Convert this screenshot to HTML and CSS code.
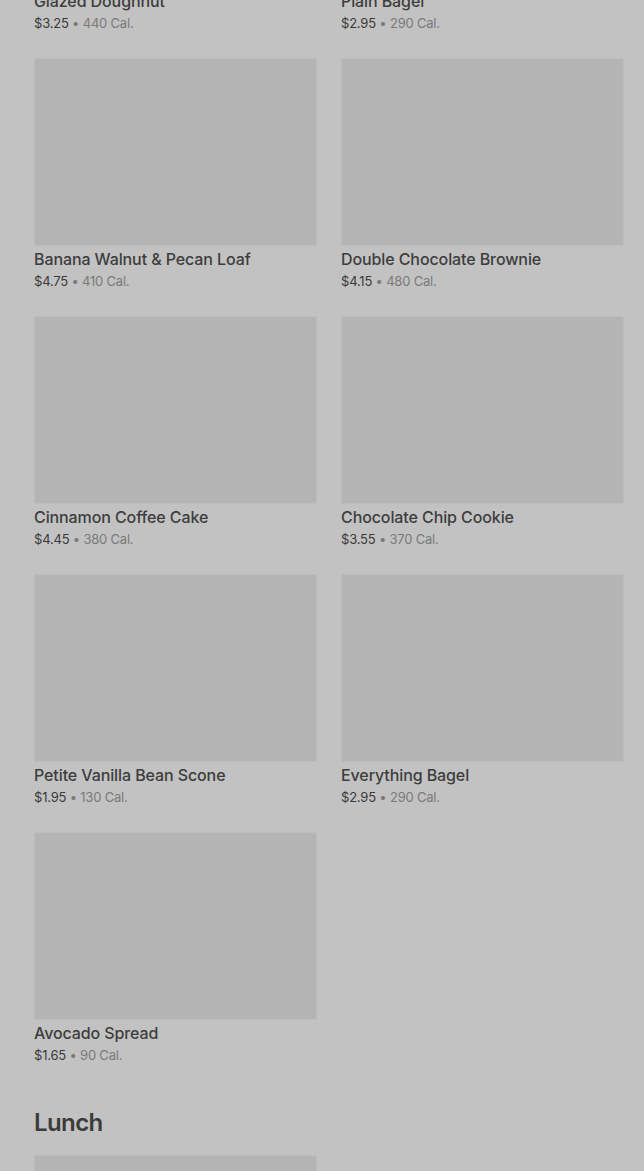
FILE: index.html
```html
<!DOCTYPE html>
<html lang="en">
<head>
<meta charset="UTF-8">
<title>Menu</title>
<link rel="stylesheet" href="styles.css">
</head>
<body>

<div class="menu">
    <div class="item-grid">
        <div class="item">
            <div class="item-photo"></div>
            <div class="item-name">Glazed Doughnut</div>
            <div class="item-meta"><span class="price">$3.25</span> • 440 Cal.</div>
        </div>
        <div class="item">
            <div class="item-photo"></div>
            <div class="item-name">Plain Bagel</div>
            <div class="item-meta"><span class="price">$2.95</span> • 290 Cal.</div>
        </div>
        <div class="item">
            <div class="item-photo"></div>
            <div class="item-name">Banana Walnut &amp; Pecan Loaf</div>
            <div class="item-meta"><span class="price">$4.75</span> • 410 Cal.</div>
        </div>
        <div class="item">
            <div class="item-photo"></div>
            <div class="item-name">Double Chocolate Brownie</div>
            <div class="item-meta"><span class="price">$4.15</span> • 480 Cal.</div>
        </div>
        <div class="item">
            <div class="item-photo"></div>
            <div class="item-name">Cinnamon Coffee Cake</div>
            <div class="item-meta"><span class="price">$4.45</span> • 380 Cal.</div>
        </div>
        <div class="item">
            <div class="item-photo"></div>
            <div class="item-name">Chocolate Chip Cookie</div>
            <div class="item-meta"><span class="price">$3.55</span> • 370 Cal.</div>
        </div>
        <div class="item">
            <div class="item-photo"></div>
            <div class="item-name">Petite Vanilla Bean Scone</div>
            <div class="item-meta"><span class="price">$1.95</span> • 130 Cal.</div>
        </div>
        <div class="item">
            <div class="item-photo"></div>
            <div class="item-name">Everything Bagel</div>
            <div class="item-meta"><span class="price">$2.95</span> • 290 Cal.</div>
        </div>
        <div class="item">
            <div class="item-photo"></div>
            <div class="item-name">Avocado Spread</div>
            <div class="item-meta"><span class="price">$1.65</span> • 90 Cal.</div>
        </div>
    </div>

    <h2 class="section-title">Lunch</h2>
    <div class="item-grid">
        <div class="item">
            <div class="item-photo"></div>
        </div>
    </div>
</div>

</body>
</html>
```

FILE: styles.css
```css
html, body {
    margin: 0;
    background-color: #c2c2c2;
}
body {
    font-family: Inter, "Noto Sans", sans-serif;
    color: #3b3b3b;
    overflow: hidden;
}
.menu {
    margin-top: -200px;
    padding: 0 20px 0 34px;
}
.item-grid {
    display: grid;
    grid-template-columns: 1fr 1fr;
    column-gap: 24px;
    row-gap: 24px;
}
.item-photo {
    height: 188px;
    background-color: #b4b4b4;
    border: 1px solid #bcbcbc;
    box-sizing: border-box;
}
.item-name {
    margin-top: 2px;
    font-size: 16px;
    font-weight: 500;
    line-height: 22px;
    letter-spacing: -0.1px;
    color: #3d3d3d;
}
.item-meta {
    font-size: 13px;
    line-height: 22px;
    letter-spacing: -0.2px;
    color: #7a7a7a;
}
.price {
    color: #3a3a3a;
}
.section-title {
    margin: 41px 0 16px;
    font-size: 24px;
    font-weight: 600;
    line-height: 32px;
    letter-spacing: -0.6px;
    color: #3b3b3b;
}
```
